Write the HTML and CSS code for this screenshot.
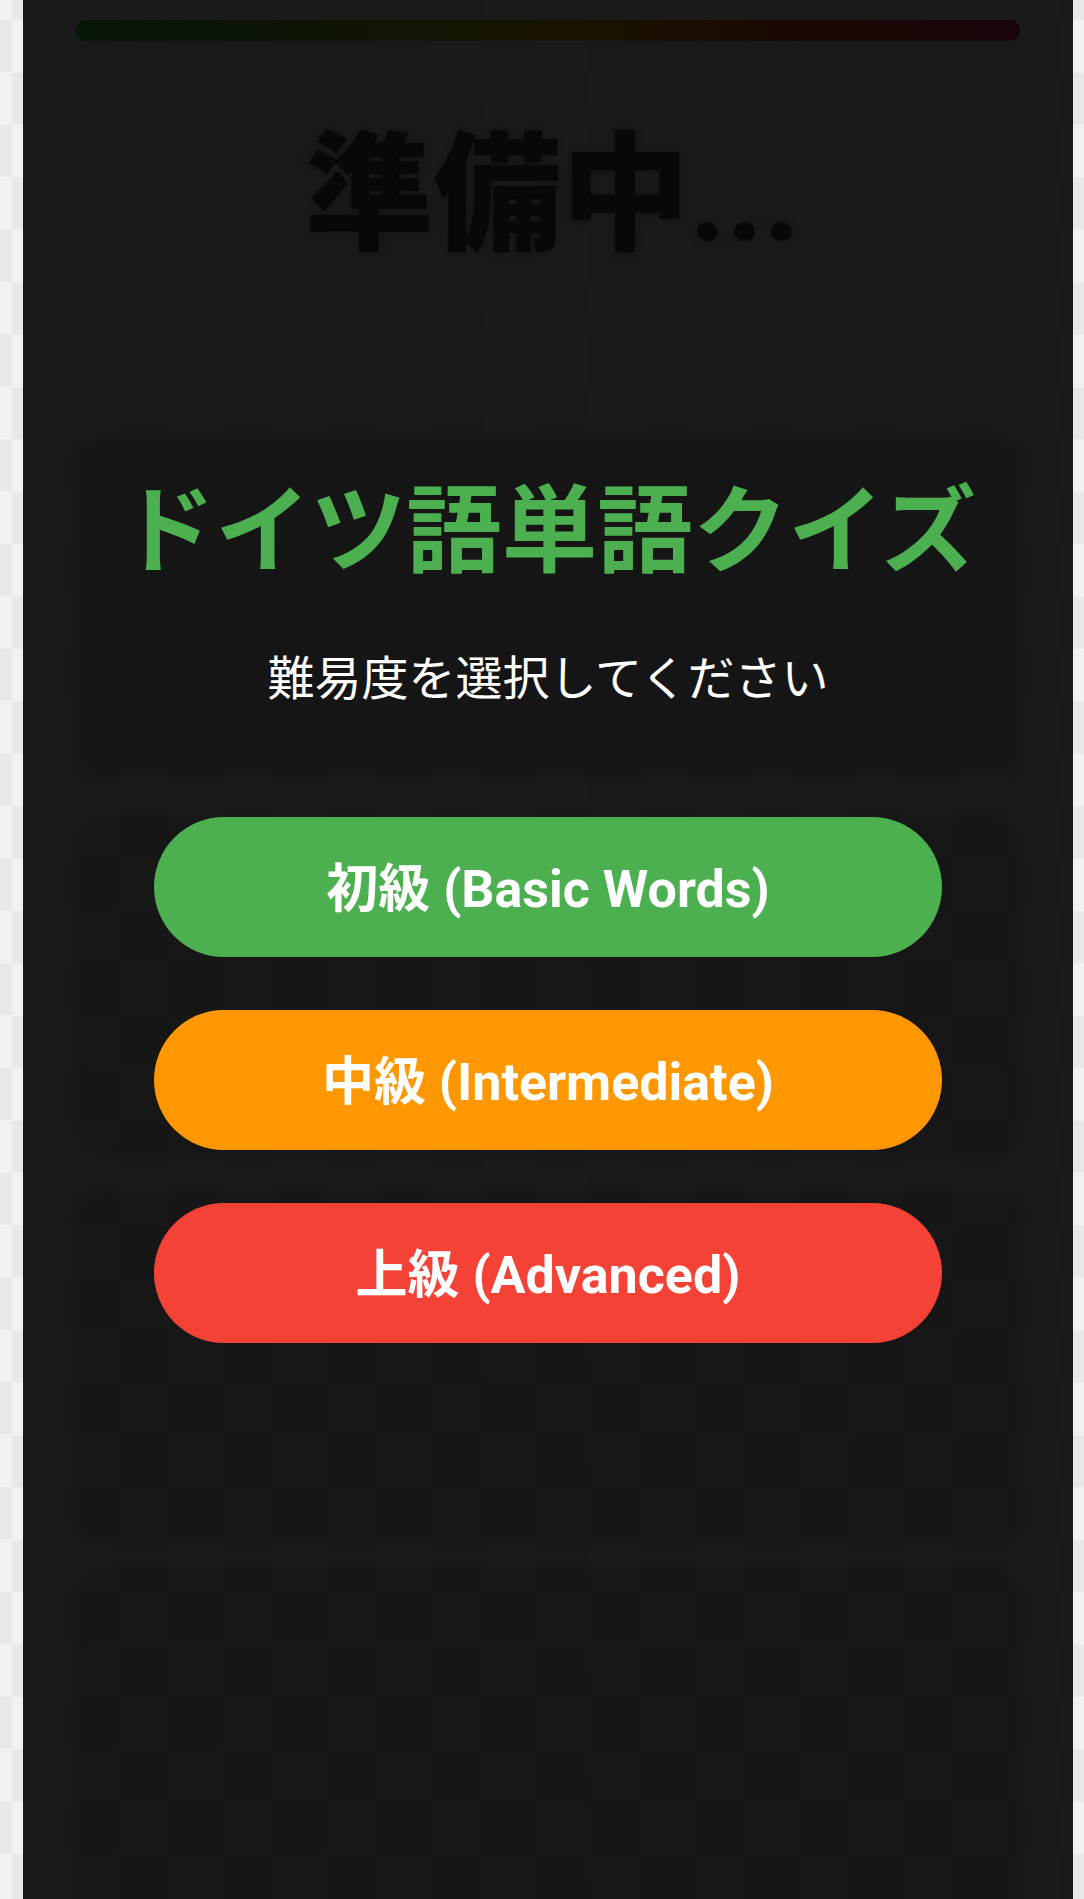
FILE: index.html
```html
<!DOCTYPE html>
<html lang="ja">
<head>
<meta charset="utf-8">
<title>ドイツ語単語クイズ</title>
<link rel="stylesheet" href="styles.css">
</head>
<body>
<div class="page">
  <div class="ghost">
    <div class="ghost-card ghost-b"></div>
    <div class="ghost-card ghost-c"></div>
    <div class="ghost-card ghost-d"></div>
  </div>
  <main class="main">
    <div class="progress"></div>
    <div class="loading">準備中<span class="dots">...</span></div>
    <section class="card">
      <h1 class="title">ドイツ語単語クイズ</h1>
      <p class="subtitle">難易度を選択してください</p>
    </section>
    <div class="levels">
      <button class="level level-basic">初級 (Basic Words)</button>
      <button class="level level-mid">中級 (Intermediate)</button>
      <button class="level level-adv">上級 (Advanced)</button>
    </div>
  </main>
</div>
</body>
</html>
```
FILE: styles.css
```css
html, body {
  margin: 0;
  padding: 0;
}
body {
  width: 1084px;
  min-height: 1899px;
  overflow: hidden;
  background: repeating-conic-gradient(#e8e8e8 0 25%, #f1f1f1 0 50%) 12px 20px / 104.8px 104.8px;
  font-family: Roboto, "Noto Sans CJK JP", sans-serif;
}
.page {
  width: 1050px;
  margin-left: 23px;
  min-height: 1899px;
  display: grid;
  background: repeating-conic-gradient(#191919 0 25%, #1a1a1a 0 50%) -11px 20px / 104.8px 104.8px;
}
.ghost, .main {
  grid-area: 1 / 1;
  display: flex;
  flex-direction: column;
  align-items: center;
}
.ghost {
  padding-top: 823px;
}
.ghost-card {
  width: 931px;
  border-radius: 22px;
  background: rgba(0, 0, 0, 0.1);
  box-shadow: 0 0 12px rgba(0, 0, 0, 0.3);
}
.ghost-b { height: 327px; }
.ghost-c { height: 339px; margin-top: 49px; }
.ghost-d { height: 360px; margin-top: 36px; }
.progress {
  margin-top: 20px;
  width: 944px;
  height: 21px;
  border-radius: 11px;
  background: linear-gradient(90deg, #061607 0%, #0f1505 30%, #1a1300 52%, #1a0903 75%, #180307 100%);
}
.loading {
  margin-top: 91px;
  padding-left: 10px;
  font-family: Roboto, "Noto Sans CJK JP", sans-serif;
  font-size: 128px;
  line-height: 128px;
  font-weight: 900;
  color: #080808;
  text-shadow: 0 0 6px rgba(0, 0, 0, 0.3);
}
.dots {
  font-weight: 700;
}
.card {
  margin-top: 184px;
  width: 931px;
  box-sizing: border-box;
  padding: 31px 0 72px;
  border-radius: 22px;
  background: rgba(0, 0, 0, 0.12);
  box-shadow: 0 0 12px rgba(0, 0, 0, 0.35);
  text-align: center;
}
.title {
  margin: 0;
  font-family: "Noto Sans CJK JP", sans-serif;
  font-size: 95.5px;
  line-height: 97px;
  font-weight: 700;
  color: #4caf50;
  white-space: nowrap;
}
.subtitle {
  margin: 79px 0 0;
  font-family: "Noto Sans CJK JP", sans-serif;
  font-size: 47px;
  line-height: 47px;
  font-weight: 400;
  color: #ffffff;
}
.levels {
  margin-top: 47px;
  display: flex;
  flex-direction: column;
  gap: 53px;
}
.level {
  width: 788px;
  height: 140px;
  border: none;
  border-radius: 70px;
  color: #ffffff;
  font-family: Roboto, "Noto Sans CJK JP", sans-serif;
  font-size: 52px;
  font-weight: 700;
  padding: 0 0 6px;
  cursor: pointer;
}
.level-basic { background: #4caf50; }
.level-mid { background: #ff9800; }
.level-adv { background: #f44336; }
```
